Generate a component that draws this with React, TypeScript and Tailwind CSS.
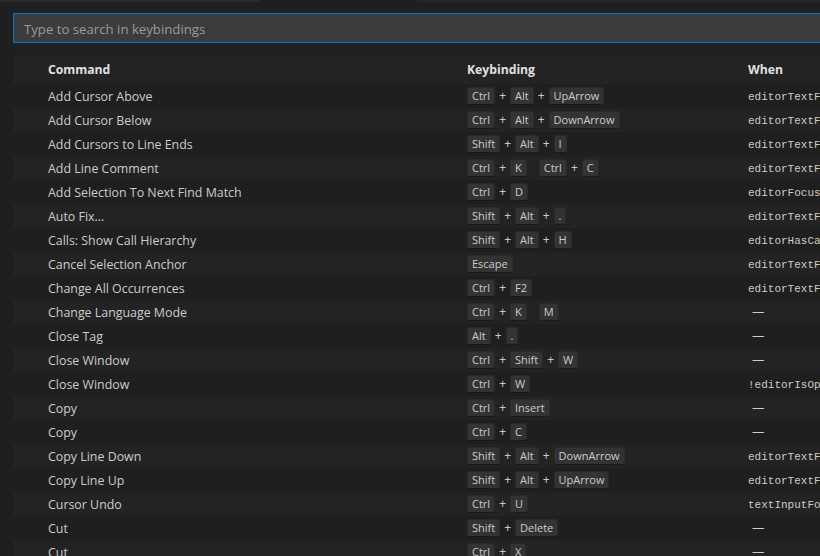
import React from "react";

type Row = { cmd: string; keys: string[][]; when: string | null };

const rows: Row[] = [
  { cmd: "Add Cursor Above", keys: [["Ctrl", "Alt", "UpArrow"]], when: "editorTextFocus" },
  { cmd: "Add Cursor Below", keys: [["Ctrl", "Alt", "DownArrow"]], when: "editorTextFocus" },
  { cmd: "Add Cursors to Line Ends", keys: [["Shift", "Alt", "I"]], when: "editorTextFocus" },
  { cmd: "Add Line Comment", keys: [["Ctrl", "K"], ["Ctrl", "C"]], when: "editorTextFocus" },
  { cmd: "Add Selection To Next Find Match", keys: [["Ctrl", "D"]], when: "editorFocus" },
  { cmd: "Auto Fix...", keys: [["Shift", "Alt", "."]], when: "editorTextFocus" },
  { cmd: "Calls: Show Call Hierarchy", keys: [["Shift", "Alt", "H"]], when: "editorHasCallHierarchyProvider" },
  { cmd: "Cancel Selection Anchor", keys: [["Escape"]], when: "editorTextFocus" },
  { cmd: "Change All Occurrences", keys: [["Ctrl", "F2"]], when: "editorTextFocus" },
  { cmd: "Change Language Mode", keys: [["Ctrl", "K"], ["M"]], when: null },
  { cmd: "Close Tag", keys: [["Alt", "."]], when: null },
  { cmd: "Close Window", keys: [["Ctrl", "Shift", "W"]], when: null },
  { cmd: "Close Window", keys: [["Ctrl", "W"]], when: "!editorIsOpen" },
  { cmd: "Copy", keys: [["Ctrl", "Insert"]], when: null },
  { cmd: "Copy", keys: [["Ctrl", "C"]], when: null },
  { cmd: "Copy Line Down", keys: [["Shift", "Alt", "DownArrow"]], when: "editorTextFocus" },
  { cmd: "Copy Line Up", keys: [["Shift", "Alt", "UpArrow"]], when: "editorTextFocus" },
  { cmd: "Cursor Undo", keys: [["Ctrl", "U"]], when: "textInputFocus" },
  { cmd: "Cut", keys: [["Shift", "Delete"]], when: null },
  { cmd: "Cut", keys: [["Ctrl", "X"]], when: null },
];

function Key({ k }: { k: string }) {
  return (
    <span className="inline-flex items-center h-[18px] px-[4px] rounded-[3px] bg-[#333333] border border-[#2b2b2b] border-b-[#1a1a1a] text-[11px] leading-none text-[#cccccc]">
      {k}
    </span>
  );
}

function Chord({ keys }: { keys: string[] }) {
  return (
    <span className="inline-flex items-center gap-[4px]">
      {keys.map((k, i) => (
        <React.Fragment key={i}>
          {i > 0 && <span className="text-[12px] text-[#cccccc]">+</span>}
          <Key k={k} />
        </React.Fragment>
      ))}
    </span>
  );
}

export default function App() {
  return (
    <div
      className="w-[820px] h-[556px] overflow-hidden bg-[#1f1f1f] text-[#cccccc] relative"
      style={{ fontFamily: '"Open Sans", "Noto Sans", sans-serif' }}
    >
      <div className="flex h-[2px]">
        <div className="w-[259px] bg-[#2b2b2b]" />
        <div className="w-[158px] bg-[#1f1f1f]" />
        <div className="flex-1 bg-[#262626]" />
      </div>
      <div className="pl-[13px] pt-[11px]">
        <div className="h-[30px] border border-[#0078d4] bg-[#3c3c3c] flex items-center pl-[10px] pt-[3px] -mr-[10px]">
          <span className="text-[13.2px] text-[#9a9a9a]">Type to search in keybindings</span>
        </div>
        <div className="mt-[12px]">
          <div className="grid grid-cols-[419px_281px_1fr] h-[29px] items-center pl-[35px] pt-[2px] bg-[#232323] font-bold text-[12.2px] text-[#e0e0e0]">
            <span>Command</span>
            <span>Keybinding</span>
            <span>When</span>
          </div>
          {rows.map((r, i) => (
            <div
              key={i}
              className={`grid grid-cols-[419px_281px_1fr] h-[24px] items-center pl-[35px] text-[12.4px] ${i % 2 === 1 ? "bg-[#232323]" : ""}`}
            >
              <span className="whitespace-nowrap pt-[2px]">{r.cmd}</span>
              <span className="flex items-center gap-[12px] pb-[1px]">
                {r.keys.map((c, j) => (
                  <Chord key={j} keys={c} />
                ))}
              </span>
              <span className="whitespace-nowrap overflow-hidden pt-[1px]">
                {r.when ? (
                  <span className="text-[11px]" style={{ fontFamily: '"Liberation Mono", monospace' }}>
                    {r.when}
                  </span>
                ) : (
                  <span className="ml-[4px]">—</span>
                )}
              </span>
            </div>
          ))}
        </div>
      </div>
    </div>
  );
}
